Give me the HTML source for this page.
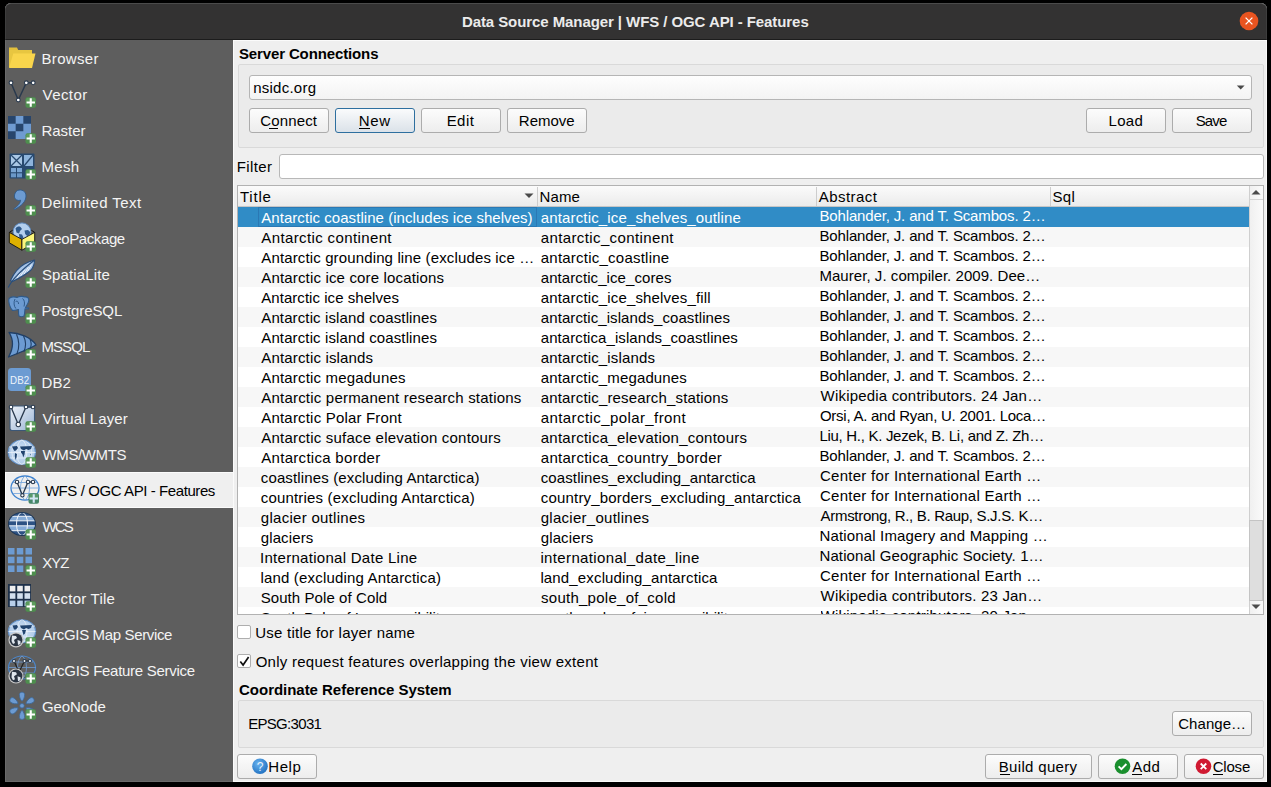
<!DOCTYPE html><html><head><meta charset="utf-8"><style>
*{margin:0;padding:0;box-sizing:border-box}
html,body{width:1271px;height:787px;background:#000;overflow:hidden;font-family:"Liberation Sans",sans-serif;font-size:15px;color:#000}
.a{position:absolute}
.t{position:absolute;white-space:pre;line-height:20px;height:20px}
.btn{position:absolute;border:1px solid #acacac;border-radius:3px;background:linear-gradient(#fcfcfc,#ededed)}
.btn.def{border-color:#2e6f9f;background:linear-gradient(#fafbfc,#dbe2e9)}
.grp{position:absolute;border:1px solid #d9d9d9;background:#ebebeb;border-radius:2px}
.ul{position:absolute;height:1px;background:#000}
</style></head><body>
<div class="a" style="left:5px;top:3px;width:1262px;height:779px;background:#efefef;border-radius:6px 6px 0 0"></div>
<div class="a" style="left:5px;top:3px;width:1262px;height:37px;background:#333333;border-radius:6px 6px 0 0;border-top:1px solid #4b4b4b;border-left:1px solid #3d3d3d;border-right:1px solid #3d3d3d;border-bottom:1px solid #1c1c1c;background:#333232"></div>
<svg class="a" style="left:1239px;top:11px" width="20" height="20" viewBox="0 0 20 20"><circle cx="10" cy="10" r="9.3" fill="#e95420"/><path d="M6.6 6.6L13.4 13.4M13.4 6.6L6.6 13.4" stroke="#fff" stroke-width="1.3"/><circle cx="10" cy="10" r="1" fill="#fff"/></svg>
<div class="a" style="left:5px;top:40px;width:228px;height:742px;background:#5e5e5e"></div>
<svg class="a" style="left:5px;top:40px" width="40" height="36" viewBox="0 0 40 36"><path d="M4 7.5h8l1.2 2.5H27v4H4z" fill="#e2bf3c"/><path d="M4 10h23v17H4z" fill="#e8c640"/><path d="M8.3 13.5H30.5L27 28H4z" fill="#f9d54c"/></svg>
<svg class="a" style="left:5px;top:76px" width="40" height="36" viewBox="0 0 40 36"><path d="M6 6.8L13.3 24L21.3 6.8H28.2" stroke="#2a3a4e" stroke-width="1.5" fill="none"/><circle cx="6" cy="6.8" r="1.9" fill="#fff" stroke="#2a3a4e" stroke-width="1.1"/><circle cx="21.3" cy="6.8" r="1.9" fill="#fff" stroke="#2a3a4e" stroke-width="1.1"/><circle cx="28.2" cy="6.8" r="1.9" fill="#fff" stroke="#2a3a4e" stroke-width="1.1"/><circle cx="13.3" cy="24" r="1.9" fill="#fff" stroke="#2a3a4e" stroke-width="1.1"/><g transform="translate(0 0)"><rect x="20.5" y="21.3" width="10.5" height="10.5" rx="2" fill="#4e8f4e"/><rect x="21.3" y="22.1" width="8.9" height="4.6" rx="1.2" fill="#6aa86a" opacity=".55"/><path d="M25.75 22.35v8.4M21.55 26.55h8.4" stroke="#ffffff" stroke-width="2.1"/></g></svg>
<svg class="a" style="left:5px;top:112px" width="40" height="36" viewBox="0 0 40 36"><rect x="3" y="4" width="23" height="23" fill="#6f9bd1"/><path d="M3 4h7.67v7.67H3zM18.33 4H26v7.67h-7.67zM10.67 11.67h7.67v7.67h-7.67zM3 19.33h7.67V27H3z" fill="#27456c"/><g transform="translate(0 0)"><rect x="20.5" y="21.3" width="10.5" height="10.5" rx="2" fill="#4e8f4e"/><rect x="21.3" y="22.1" width="8.9" height="4.6" rx="1.2" fill="#6aa86a" opacity=".55"/><path d="M25.75 22.35v8.4M21.55 26.55h8.4" stroke="#ffffff" stroke-width="2.1"/></g></svg>
<svg class="a" style="left:5px;top:148px" width="40" height="36" viewBox="0 0 40 36"><rect x="4.5" y="5.5" width="25" height="25" rx="1" fill="#284a70"/><rect x="6" y="7" width="11" height="11" fill="#a9c8e6"/><path d="M6 7L17 18M17 7L6 18" stroke="#284a70" stroke-width="1.3"/><rect x="19" y="7" width="9" height="11" fill="#8db4dc"/><path d="M28 7L19 18" stroke="#284a70" stroke-width="1.3"/><rect x="6" y="20" width="5" height="4.2" fill="#7aa6d4"/><rect x="12" y="20" width="5" height="4.2" fill="#7aa6d4"/><rect x="6" y="25.3" width="5" height="4" fill="#6a98c8"/><rect x="12" y="25.3" width="5" height="4" fill="#6a98c8"/><g transform="translate(0 0)"><rect x="20.5" y="21.3" width="10.5" height="10.5" rx="2" fill="#4e8f4e"/><rect x="21.3" y="22.1" width="8.9" height="4.6" rx="1.2" fill="#6aa86a" opacity=".55"/><path d="M25.75 22.35v8.4M21.55 26.55h8.4" stroke="#ffffff" stroke-width="2.1"/></g></svg>
<svg class="a" style="left:5px;top:184px" width="40" height="36" viewBox="0 0 40 36"><path d="M12.5 6.5c4-1.5 8.5 0.5 8.5 5.5c0 5.5-4.5 10-11.5 13.5l-0.6-0.8c4-2.8 6.5-5.5 6.7-8.5c-2.5 0.8-5.8-0.3-6.2-3.2c-0.3-2.8 1.3-5.6 3.1-6.5z" fill="#6c9bd2" stroke="#2f5a8a" stroke-width="0.9"/><g transform="translate(0 0)"><rect x="20.5" y="21.3" width="10.5" height="10.5" rx="2" fill="#4e8f4e"/><rect x="21.3" y="22.1" width="8.9" height="4.6" rx="1.2" fill="#6aa86a" opacity=".55"/><path d="M25.75 22.35v8.4M21.55 26.55h8.4" stroke="#ffffff" stroke-width="2.1"/></g></svg>
<svg class="a" style="left:5px;top:220px" width="40" height="36" viewBox="0 0 40 36"><circle cx="17" cy="11.7" r="8.8" fill="#b3cfee" stroke="#5e90cc" stroke-width=".9"/><path d="M10.5 8.5c1.5-2 3.5-2.5 5-1.5l1.5 2l-2 2l-1 2.5l-2.5-1zM19.5 10.5l3.5-0.5l2.2 2l-0.5 2.5l-2.5 1.5l-2-2zM14 14l3 0.5l1.5 3l-2 2.5l-2-1.5z" fill="#2f5a8c"/><path d="M4.3 12.4L7.6 10.3M29.7 12.4L26.4 10.3" stroke="#111" stroke-width="1"/><path d="M4.3 12.4L16.9 19.4V30.2L4.3 22.8z" fill="#dfb100" stroke="#111" stroke-width=".9" stroke-linejoin="round"/><path d="M16.9 19.4L29.7 12.4V22.8L16.9 30.2z" fill="#fbf67c" stroke="#111" stroke-width=".9" stroke-linejoin="round"/><g transform="translate(0 0)"><rect x="20.5" y="21.3" width="10.5" height="10.5" rx="2" fill="#4e8f4e"/><rect x="21.3" y="22.1" width="8.9" height="4.6" rx="1.2" fill="#6aa86a" opacity=".55"/><path d="M25.75 22.35v8.4M21.55 26.55h8.4" stroke="#ffffff" stroke-width="2.1"/></g></svg>
<svg class="a" style="left:5px;top:256px" width="40" height="36" viewBox="0 0 40 36"><path d="M5.5 24.5C9 17 14 11 19.5 8C23 6 26.5 4.8 29.5 4C29.5 8 28.5 11 26 14C22 17.5 16 21.5 7.5 25.5z" fill="#a6c3e6" stroke="#2a4f7c" stroke-width="1.1" stroke-linejoin="round"/><path d="M9 23.5L12 19M12 22L16 16.5M15.5 20L20 13.5M19 18L23.5 11M22.5 15.5L26.5 8.5" stroke="#eef4fb" stroke-width="1" fill="none"/><path d="M3.2 31.5C7 24 14 16 29.3 4.3" stroke="#2a4f7c" stroke-width="1.2" fill="none"/><g transform="translate(0 0)"><rect x="20.5" y="21.3" width="10.5" height="10.5" rx="2" fill="#4e8f4e"/><rect x="21.3" y="22.1" width="8.9" height="4.6" rx="1.2" fill="#6aa86a" opacity=".55"/><path d="M25.75 22.35v8.4M21.55 26.55h8.4" stroke="#ffffff" stroke-width="2.1"/></g></svg>
<svg class="a" style="left:5px;top:292px" width="40" height="36" viewBox="0 0 40 36"><path d="M4 6.5C6 4.5 10 4.5 12 5.5C14 4.2 18 4 20 5C22 4.5 24 6 23.8 8.5C23.5 11 22 13 20.5 15.5L23.8 16L23.5 17L20 16.8C19.8 19 19.8 22 19 23.8C18 25 15 25 14 23.8C13.3 22 13.5 19.5 13.5 17.5C11.5 18 9 18.5 7.5 18.5C5 16 3 10 4 6.5Z" fill="#6c9bd2" stroke="#2f5a8a" stroke-width="1.1" stroke-linejoin="round"/><path d="M10 7C8.5 10 8.8 14 10.8 16.5M10.5 10C11.5 8.5 13.5 9 13.5 12M17.5 6.5C19.5 8 20 11 19 14.5" stroke="#2f5a8a" stroke-width="1" fill="none"/><g transform="translate(0 0)"><rect x="20.5" y="21.3" width="10.5" height="10.5" rx="2" fill="#4e8f4e"/><rect x="21.3" y="22.1" width="8.9" height="4.6" rx="1.2" fill="#6aa86a" opacity=".55"/><path d="M25.75 22.35v8.4M21.55 26.55h8.4" stroke="#ffffff" stroke-width="2.1"/></g></svg>
<svg class="a" style="left:5px;top:328px" width="40" height="36" viewBox="0 0 40 36"><path d="M4 4.5C14 5 26 9 31 17C24 21 14 25 3.5 29C8 21 9 12 4 4.5z" fill="#6c9bd2" stroke="#203f66" stroke-width="1.3" stroke-linejoin="round"/><path d="M11.5 6.2C14.5 13 14.5 20 11.8 26.3M18.5 8C21 13 21 19 18.8 23.7M25 11.2C26.5 14 26.5 17 25.3 20.6" stroke="#203f66" stroke-width="1.1" fill="none"/><g transform="translate(0 0)"><rect x="20.5" y="21.3" width="10.5" height="10.5" rx="2" fill="#4e8f4e"/><rect x="21.3" y="22.1" width="8.9" height="4.6" rx="1.2" fill="#6aa86a" opacity=".55"/><path d="M25.75 22.35v8.4M21.55 26.55h8.4" stroke="#ffffff" stroke-width="2.1"/></g></svg>
<svg class="a" style="left:5px;top:364px" width="40" height="36" viewBox="0 0 40 36"><rect x="3" y="4" width="23" height="23" rx="3.5" fill="#6c9bd2"/><text x="14.6" y="20.3" font-size="11.5" font-family="Liberation Sans" fill="#eef4fb" text-anchor="middle" textLength="19" lengthAdjust="spacingAndGlyphs">DB2</text><g transform="translate(0 0)"><rect x="20.5" y="21.3" width="10.5" height="10.5" rx="2" fill="#4e8f4e"/><rect x="21.3" y="22.1" width="8.9" height="4.6" rx="1.2" fill="#6aa86a" opacity=".55"/><path d="M25.75 22.35v8.4M21.55 26.55h8.4" stroke="#ffffff" stroke-width="2.1"/></g></svg>
<svg class="a" style="left:5px;top:400px" width="40" height="36" viewBox="0 0 40 36"><defs><linearGradient id="vlg" x1="0" y1="0" x2="1" y2="1"><stop offset="0" stop-color="#eef2f8"/><stop offset="1" stop-color="#9cb6d6"/></linearGradient></defs><rect x="5" y="6" width="24.5" height="24.5" rx="2" fill="url(#vlg)" stroke="#3b5777" stroke-width="1.1"/><path d="M6 7L13.3 24.5L21 7H28" stroke="#2a3a4e" stroke-width="1.3" fill="none"/><circle cx="6" cy="7" r="1.8" fill="#fff" stroke="#2a3a4e" stroke-width="1.1"/><circle cx="21" cy="7" r="1.8" fill="#fff" stroke="#2a3a4e" stroke-width="1.1"/><circle cx="28" cy="7" r="1.8" fill="#fff" stroke="#2a3a4e" stroke-width="1.1"/><circle cx="13.3" cy="24.5" r="2.2" fill="#fff" stroke="#2a3a4e" stroke-width="1.1"/><g transform="translate(0 0)"><rect x="20.5" y="21.3" width="10.5" height="10.5" rx="2" fill="#4e8f4e"/><rect x="21.3" y="22.1" width="8.9" height="4.6" rx="1.2" fill="#6aa86a" opacity=".55"/><path d="M25.75 22.35v8.4M21.55 26.55h8.4" stroke="#ffffff" stroke-width="2.1"/></g></svg>
<svg class="a" style="left:5px;top:436px" width="40" height="36" viewBox="0 0 40 36"><defs><radialGradient id="wmg" cx=".5" cy=".5" r=".55"><stop offset="0" stop-color="#d6e5f5"/><stop offset=".8" stop-color="#b3cdea"/><stop offset="1" stop-color="#6f9bd0"/></radialGradient></defs><ellipse cx="16.8" cy="16.25" rx="13.8" ry="12.3" fill="url(#wmg)" stroke="#5f8fc8" stroke-width="1"/><path d="M4 11h25.6M3 16.5h27.6M4.5 22h24.6" stroke="#eef4fa" stroke-width=".7" fill="none"/><ellipse cx="16.8" cy="16.25" rx="5" ry="12" fill="none" stroke="#eef4fa" stroke-width=".7"/><ellipse cx="16.8" cy="16.25" rx="10" ry="12" fill="none" stroke="#eef4fa" stroke-width=".6"/><path d="M7 10.5L12 10L13 12L11 14.5L9.5 15L8 12.8zM10 17L12 18L11.5 21.5L10.5 24L9.8 20zM15 10.5L27 10L26 13L23.5 14L21 13L19 14.5L16 13zM16 15L20 15L19.5 18.5L18.2 21.5L17.5 18.5L16 16.5zM25 18l1 .5l-.5 1z" fill="#20436e"/><g transform="translate(0 0)"><rect x="20.5" y="21.3" width="10.5" height="10.5" rx="2" fill="#4e8f4e"/><rect x="21.3" y="22.1" width="8.9" height="4.6" rx="1.2" fill="#6aa86a" opacity=".55"/><path d="M25.75 22.35v8.4M21.55 26.55h8.4" stroke="#ffffff" stroke-width="2.1"/></g></svg>
<div class="a" style="left:5px;top:472px;width:228px;height:36px;background:#efefef"></div>
<svg class="a" style="left:5px;top:472px" width="40" height="36" viewBox="0 0 40 36"><ellipse cx="20" cy="16" rx="14" ry="12" fill="none" stroke="#3f83cf" stroke-width="1.3"/><path d="M6 16h28M8 10.5h24M8 21.5h24M20 4c-6 4-6 20 0 24M20 4c6 4 6 20 0 24" stroke="#7aa8dc" stroke-width=".9" fill="none"/><path d="M12 10L17.4 23.3L23 10H28" stroke="#2a3a4e" stroke-width="1.3" fill="none"/><circle cx="12" cy="10" r="1.7" fill="#fff" stroke="#2a3a4e" stroke-width="1.1"/><circle cx="23" cy="10" r="1.7" fill="#fff" stroke="#2a3a4e" stroke-width="1.1"/><circle cx="28" cy="10" r="1.7" fill="#fff" stroke="#2a3a4e" stroke-width="1.1"/><circle cx="17.4" cy="23.3" r="1.7" fill="#fff" stroke="#2a3a4e" stroke-width="1.1"/><g transform="translate(3 0)"><rect x="20.5" y="21.3" width="10.5" height="10.5" rx="2" fill="#46876a"/><rect x="21.3" y="22.1" width="8.9" height="4.6" rx="1.2" fill="#6aa86a" opacity=".55"/><path d="M25.75 22.35v8.4M21.55 26.55h8.4" stroke="#d3e6f5" stroke-width="2.1"/></g></svg>
<svg class="a" style="left:5px;top:508px" width="40" height="36" viewBox="0 0 40 36"><defs><clipPath id="wcsc"><ellipse cx="17" cy="16" rx="13" ry="11"/></clipPath></defs><ellipse cx="17" cy="16" rx="14" ry="12" fill="#1e3858"/><g clip-path="url(#wcsc)"><rect x="0" y="0" width="34" height="34" fill="#2d5283"/><rect x="0" y="8.5" width="34" height="4" fill="#86acd8"/><rect x="0" y="13" width="34" height="4.5" fill="#2d5283"/><rect x="0" y="18" width="34" height="4.5" fill="#86acd8"/><path d="M0 8.3h34M0 12.8h34M0 17.8h34M0 22.7h34" stroke="#f4f8fc" stroke-width="1"/><ellipse cx="17" cy="16" rx="5.5" ry="11.5" fill="none" stroke="#f4f8fc" stroke-width="1"/></g><g transform="translate(0 0)"><rect x="20.5" y="21.3" width="10.5" height="10.5" rx="2" fill="#4e8f4e"/><rect x="21.3" y="22.1" width="8.9" height="4.6" rx="1.2" fill="#6aa86a" opacity=".55"/><path d="M25.75 22.35v8.4M21.55 26.55h8.4" stroke="#ffffff" stroke-width="2.1"/></g></svg>
<svg class="a" style="left:5px;top:544px" width="40" height="36" viewBox="0 0 40 36"><g fill="#6c9bd2"><rect x="3" y="4" width="6.5" height="6.5"/><rect x="11.8" y="4" width="6.5" height="6.5"/><rect x="20.5" y="4" width="6.5" height="6.5"/><rect x="3" y="12.7" width="6.5" height="6.5"/><rect x="11.8" y="12.7" width="6.5" height="6.5"/><rect x="20.5" y="12.7" width="6.5" height="6.5"/><rect x="3" y="21.5" width="6.5" height="6.5"/><rect x="11.8" y="21.5" width="6.5" height="6.5"/></g><g transform="translate(0 0)"><rect x="20.5" y="21.3" width="10.5" height="10.5" rx="2" fill="#4e8f4e"/><rect x="21.3" y="22.1" width="8.9" height="4.6" rx="1.2" fill="#6aa86a" opacity=".55"/><path d="M25.75 22.35v8.4M21.55 26.55h8.4" stroke="#ffffff" stroke-width="2.1"/></g></svg>
<svg class="a" style="left:5px;top:580px" width="40" height="36" viewBox="0 0 40 36"><rect x="3" y="4" width="23" height="23" fill="#1d3049"/><g fill="#eeeeee"><rect x="4.8" y="5.8" width="5.6" height="5.6"/><rect x="12.2" y="5.8" width="5.6" height="5.6"/><rect x="19.5" y="5.8" width="5.6" height="5.6"/></g><g fill="#d3e0ee"><rect x="4.8" y="13.2" width="5.6" height="5.6"/><rect x="12.2" y="13.2" width="5.6" height="5.6"/><rect x="19.5" y="13.2" width="5.6" height="5.6"/></g><g fill="#b9d0ea"><rect x="4.8" y="20.6" width="5.6" height="5.6"/><rect x="12.2" y="20.6" width="5.6" height="5.6"/><rect x="19.5" y="20.6" width="5.6" height="5.6"/></g><g transform="translate(0 0)"><rect x="20.5" y="21.3" width="10.5" height="10.5" rx="2" fill="#4e8f4e"/><rect x="21.3" y="22.1" width="8.9" height="4.6" rx="1.2" fill="#6aa86a" opacity=".55"/><path d="M25.75 22.35v8.4M21.55 26.55h8.4" stroke="#ffffff" stroke-width="2.1"/></g></svg>
<svg class="a" style="left:5px;top:616px" width="40" height="36" viewBox="0 0 40 36"><defs><radialGradient id="amg" cx=".5" cy=".5" r=".55"><stop offset="0" stop-color="#d6e5f5"/><stop offset=".8" stop-color="#b3cdea"/><stop offset="1" stop-color="#6f9bd0"/></radialGradient></defs><ellipse cx="17" cy="15.3" rx="13.8" ry="11.6" fill="url(#amg)" stroke="#5f8fc8" stroke-width="1"/><path d="M4 10h26M3.5 15.5h27M6 21h22" stroke="#eef4fa" stroke-width=".7" fill="none"/><ellipse cx="17" cy="15.3" rx="5" ry="11.4" fill="none" stroke="#eef4fa" stroke-width=".7"/><path d="M7.5 9.5L12 9L13 11L11 13.5L9 13.5zM15 9.5L27 9L26 12L23.5 13L21 12L19 13.5L16 12zM17 14L21 14L20 17.5L18.5 19z" fill="#20436e"/><circle cx="11" cy="23.8" r="7.6" fill="#c8c8c8"/><circle cx="11" cy="23.8" r="6.4" fill="#2a3442"/><path d="M7 19.5l4 0.5l1 2l-3 2l1 3l-2 1l-1.5-3zM12.5 24l3 1l0 3l-2.5 1z" fill="#dfe6ee"/><g transform="translate(0 0)"><rect x="20.5" y="21.3" width="10.5" height="10.5" rx="2" fill="#4e8f4e"/><rect x="21.3" y="22.1" width="8.9" height="4.6" rx="1.2" fill="#6aa86a" opacity=".55"/><path d="M25.75 22.35v8.4M21.55 26.55h8.4" stroke="#ffffff" stroke-width="2.1"/></g></svg>
<svg class="a" style="left:5px;top:652px" width="40" height="36" viewBox="0 0 40 36"><ellipse cx="17" cy="15.5" rx="13.5" ry="11.5" fill="none" stroke="#4a86cc" stroke-width="1.2"/><path d="M4 15.5h27M6 10h22M6 21h22M17 4c-6 4-6 19 0 23M17 4c6 4 6 19 0 23" stroke="#6f9bd0" stroke-width=".8" fill="none"/><path d="M9 9L14 20L19.5 9H25" stroke="#222" stroke-width="1.2" fill="none"/><circle cx="9" cy="9" r="1.5" fill="#fff" stroke="#2a3a4e" stroke-width="1.1"/><circle cx="19.5" cy="9" r="1.5" fill="#fff" stroke="#2a3a4e" stroke-width="1.1"/><circle cx="25" cy="9" r="1.5" fill="#fff" stroke="#2a3a4e" stroke-width="1.1"/><circle cx="11" cy="24" r="7.6" fill="#c8c8c8"/><circle cx="11" cy="24" r="6.4" fill="#2a3442"/><path d="M7 19.7l4 0.5l1 2l-3 2l1 3l-2 1l-1.5-3zM12.5 24.2l3 1l0 3l-2.5 1z" fill="#dfe6ee"/><g transform="translate(0 0)"><rect x="20.5" y="21.3" width="10.5" height="10.5" rx="2" fill="#4e8f4e"/><rect x="21.3" y="22.1" width="8.9" height="4.6" rx="1.2" fill="#6aa86a" opacity=".55"/><path d="M25.75 22.35v8.4M21.55 26.55h8.4" stroke="#ffffff" stroke-width="2.1"/></g></svg>
<svg class="a" style="left:5px;top:688px" width="40" height="36" viewBox="0 0 40 36"><g fill="#6c9bd2" stroke="#3d6898" stroke-width=".8"><circle cx="17" cy="17.8" r="2.3"/><path d="M17 13.3C15.4 12 14.1 8.5 14.4 6.2C14.7 4.7 15.9 4.2 17 4.2C18.1 4.2 19.3 4.7 19.6 6.2C19.9 8.5 18.6 12 17 13.3Z" transform="rotate(0 17 17.8)"/><path d="M17 13.3C15.4 12 14.1 8.5 14.4 6.2C14.7 4.7 15.9 4.2 17 4.2C18.1 4.2 19.3 4.7 19.6 6.2C19.9 8.5 18.6 12 17 13.3Z" transform="rotate(60 17 17.8)"/><path d="M17 13.3C15.4 12 14.1 8.5 14.4 6.2C14.7 4.7 15.9 4.2 17 4.2C18.1 4.2 19.3 4.7 19.6 6.2C19.9 8.5 18.6 12 17 13.3Z" transform="rotate(120 17 17.8)"/><path d="M17 13.3C15.4 12 14.1 8.5 14.4 6.2C14.7 4.7 15.9 4.2 17 4.2C18.1 4.2 19.3 4.7 19.6 6.2C19.9 8.5 18.6 12 17 13.3Z" transform="rotate(180 17 17.8)"/><path d="M17 13.3C15.4 12 14.1 8.5 14.4 6.2C14.7 4.7 15.9 4.2 17 4.2C18.1 4.2 19.3 4.7 19.6 6.2C19.9 8.5 18.6 12 17 13.3Z" transform="rotate(240 17 17.8)"/><path d="M17 13.3C15.4 12 14.1 8.5 14.4 6.2C14.7 4.7 15.9 4.2 17 4.2C18.1 4.2 19.3 4.7 19.6 6.2C19.9 8.5 18.6 12 17 13.3Z" transform="rotate(300 17 17.8)"/></g><g transform="translate(0 0)"><rect x="20.5" y="21.3" width="10.5" height="10.5" rx="2" fill="#4e8f4e"/><rect x="21.3" y="22.1" width="8.9" height="4.6" rx="1.2" fill="#6aa86a" opacity=".55"/><path d="M25.75 22.35v8.4M21.55 26.55h8.4" stroke="#ffffff" stroke-width="2.1"/></g></svg>
<div class="a" style="left:233px;top:40px;width:1px;height:742px;background:#fbfbfb"></div>
<div class="a" style="left:233px;top:40px;width:1034px;height:1px;background:#fbfbfb"></div>
<div class="a" style="left:5px;top:40px;width:1px;height:742px;background:#6a6a6a"></div>
<div class="a" style="left:5px;top:781px;width:228px;height:1px;background:#6a6a6a"></div>
<div class="a" style="left:233px;top:781px;width:1034px;height:1px;background:#fafafa"></div>
<div class="a" style="left:1266px;top:40px;width:1px;height:742px;background:#fafafa"></div>
<div class="a" style="left:5px;top:472px;width:228px;height:36px;border:1px solid #fbfbfb;border-right:none"></div>
<div class="grp" style="left:238px;top:64px;width:1026px;height:84px"></div>
<div class="btn" style="left:249px;top:75px;width:1003px;height:25px;border-color:#b5b5b5;background:linear-gradient(#fefefe,#f3f3f3)"></div>
<svg class="a" style="left:1236px;top:85px" width="10" height="6"><path d="M0.8 0.5h7.8L4.7 4.6z" fill="#4a4a4a"/></svg>
<div class="btn" style="left:249px;top:108px;width:80px;height:25px"></div>
<div class="ul" style="left:269px;top:128px;width:9px"></div>
<div class="btn def" style="left:335px;top:108px;width:80px;height:25px"></div>
<div class="ul" style="left:359px;top:128px;width:11px"></div>
<div class="btn" style="left:421px;top:108px;width:80px;height:25px"></div>
<div class="btn" style="left:507px;top:108px;width:80px;height:25px"></div>
<div class="btn" style="left:1086px;top:108px;width:80px;height:25px"></div>
<div class="btn" style="left:1172px;top:108px;width:80px;height:25px"></div>
<div class="a" style="left:279px;top:154px;width:985px;height:25px;background:#fff;border:1px solid #b8b8b8;border-radius:3px"></div>
<div class="a" style="left:237px;top:185px;width:1027px;height:430px;background:#fff;border:1px solid #b2b2b2"></div>
<div class="a" style="left:238px;top:186px;width:1011px;height:21px;background:linear-gradient(#fbfbfb,#ebebeb);border-bottom:1px solid #c6c6c6"></div>
<div class="a" style="left:537px;top:187px;width:1px;height:19px;background:#cdcdcd"></div>
<div class="a" style="left:816px;top:187px;width:1px;height:19px;background:#cdcdcd"></div>
<div class="a" style="left:1050px;top:187px;width:1px;height:19px;background:#cdcdcd"></div>
<svg class="a" style="left:524px;top:193px" width="10" height="6"><path d="M0.5 0.5h9L5 5z" fill="#4a4a4a"/></svg>
<div class="a" style="left:238px;top:207px;width:1011px;height:407px;overflow:hidden">
<div class="a" style="left:0;top:0px;width:1011px;height:20px;background:#308cc6"></div>
<div class="a" style="left:0;top:20px;width:1011px;height:20px;background:#f7f7f7"></div>
<div class="a" style="left:0;top:40px;width:1011px;height:20px;background:#ffffff"></div>
<div class="a" style="left:0;top:60px;width:1011px;height:20px;background:#f7f7f7"></div>
<div class="a" style="left:0;top:80px;width:1011px;height:20px;background:#ffffff"></div>
<div class="a" style="left:0;top:100px;width:1011px;height:20px;background:#f7f7f7"></div>
<div class="a" style="left:0;top:120px;width:1011px;height:20px;background:#ffffff"></div>
<div class="a" style="left:0;top:140px;width:1011px;height:20px;background:#f7f7f7"></div>
<div class="a" style="left:0;top:160px;width:1011px;height:20px;background:#ffffff"></div>
<div class="a" style="left:0;top:180px;width:1011px;height:20px;background:#f7f7f7"></div>
<div class="a" style="left:0;top:200px;width:1011px;height:20px;background:#ffffff"></div>
<div class="a" style="left:0;top:220px;width:1011px;height:20px;background:#f7f7f7"></div>
<div class="a" style="left:0;top:240px;width:1011px;height:20px;background:#ffffff"></div>
<div class="a" style="left:0;top:260px;width:1011px;height:20px;background:#f7f7f7"></div>
<div class="a" style="left:0;top:280px;width:1011px;height:20px;background:#ffffff"></div>
<div class="a" style="left:0;top:300px;width:1011px;height:20px;background:#f7f7f7"></div>
<div class="a" style="left:0;top:320px;width:1011px;height:20px;background:#ffffff"></div>
<div class="a" style="left:0;top:340px;width:1011px;height:20px;background:#f7f7f7"></div>
<div class="a" style="left:0;top:360px;width:1011px;height:20px;background:#ffffff"></div>
<div class="a" style="left:0;top:380px;width:1011px;height:20px;background:#f7f7f7"></div>
<div class="a" style="left:0;top:400px;width:1011px;height:20px;background:#ffffff"></div>
<div class="a" style="left:20px;top:0;width:279px;height:20px;border:1px solid #2a78b4"></div>
</div>
<div class="a" style="left:1249px;top:186px;width:14px;height:428px;background:linear-gradient(90deg,#f0f0f0,#fafafa);border-left:1px solid #cfcfcf"></div>
<div class="a" style="left:1250px;top:199px;width:13px;height:1px;background:#d4d4d4"></div>
<svg class="a" style="left:1251px;top:189px" width="10" height="6"><path d="M0.5 5.5h9L5 1z" fill="#4a4a4a"/></svg>
<div class="a" style="left:1250px;top:600px;width:13px;height:1px;background:#d4d4d4"></div>
<svg class="a" style="left:1251px;top:604px" width="10" height="6"><path d="M0.5 0.5h9L5 5z" fill="#4a4a4a"/></svg>
<div class="a" style="left:1249px;top:520px;width:14px;height:81px;background:#dedede;border:1px solid #c4c4c4"></div>
<div class="a" style="left:237px;top:625px;width:14px;height:14px;background:#fff;border:1px solid #aeaeae;border-radius:2px"></div>
<div class="a" style="left:237px;top:654px;width:14px;height:14px;background:#fff;border:1px solid #aeaeae;border-radius:2px"></div>
<svg class="a" style="left:239px;top:656px" width="11" height="11"><path d="M1.3 5.5l2.8 3.6L9.6 1" stroke="#111" stroke-width="1.7" fill="none"/></svg>
<div class="grp" style="left:238px;top:700px;width:1026px;height:48px"></div>
<div class="btn" style="left:1172px;top:711px;width:80px;height:25px"></div>
<div class="btn" style="left:237px;top:754px;width:80px;height:25px"></div>
<div class="btn" style="left:985px;top:754px;width:107px;height:25px"></div>
<div class="btn" style="left:1098px;top:754px;width:80px;height:25px"></div>
<div class="btn" style="left:1184px;top:754px;width:80px;height:25px"></div>
<svg class="a" style="left:252px;top:758px" width="17" height="17" viewBox="0 0 17 17"><defs><radialGradient id="hg" cx=".4" cy=".35" r=".7"><stop offset="0" stop-color="#6ab4f0"/><stop offset="1" stop-color="#1f6fc0"/></radialGradient></defs><circle cx="8" cy="8.2" r="7.8" fill="url(#hg)"/><text x="8" y="12.6" font-size="12" text-anchor="middle" fill="#e8f2fc" font-family="Liberation Sans">?</text></svg>
<div class="ul" style="left:1000px;top:774px;width:10px"></div>
<svg class="a" style="left:1114px;top:758px" width="17" height="17" viewBox="0 0 17 17"><circle cx="8.5" cy="8.3" r="7.8" fill="#1a8f2e"/><path d="M4.6 8.4l2.8 2.8l5-5.2" stroke="#fff" stroke-width="1.9" fill="none"/></svg>
<div class="ul" style="left:1132px;top:774px;width:10px"></div>
<svg class="a" style="left:1195px;top:758px" width="17" height="17" viewBox="0 0 17 17"><circle cx="8.5" cy="8.3" r="7.8" fill="#d01a32"/><path d="M5.7 5.5l5.6 5.6M11.3 5.5l-5.6 5.6" stroke="#fff" stroke-width="1.8"/></svg>
<div class="ul" style="left:1213px;top:774px;width:10px"></div>
<div class="t" style="left:461.90px;top:11.50px;color:#ebebeb;font-weight:bold;letter-spacing:-0.079px;">Data Source Manager | WFS / OGC API - Features</div>
<div class="t" style="left:41.45px;top:48.80px;color:#f4f4f4;letter-spacing:0.350px;">Browser</div>
<div class="t" style="left:42.58px;top:84.80px;color:#f4f4f4;letter-spacing:0.415px;">Vector</div>
<div class="t" style="left:41.45px;top:120.80px;color:#f4f4f4;letter-spacing:-0.030px;">Raster</div>
<div class="t" style="left:41.45px;top:156.80px;color:#f4f4f4;letter-spacing:0.333px;">Mesh</div>
<div class="t" style="left:41.45px;top:192.80px;color:#f4f4f4;letter-spacing:0.440px;">Delimited Text</div>
<div class="t" style="left:41.95px;top:228.80px;color:#f4f4f4;letter-spacing:-0.386px;">GeoPackage</div>
<div class="t" style="left:41.95px;top:264.80px;color:#f4f4f4;letter-spacing:0.136px;">SpatiaLite</div>
<div class="t" style="left:41.45px;top:300.80px;color:#f4f4f4;letter-spacing:-0.100px;">PostgreSQL</div>
<div class="t" style="left:41.45px;top:336.80px;color:#f4f4f4;letter-spacing:-0.913px;">MSSQL</div>
<div class="t" style="left:41.45px;top:372.80px;color:#f4f4f4;letter-spacing:0.125px;">DB2</div>
<div class="t" style="left:42.58px;top:408.80px;color:#f4f4f4;letter-spacing:0.106px;">Virtual Layer</div>
<div class="t" style="left:42.58px;top:444.80px;color:#f4f4f4;letter-spacing:-0.396px;">WMS/WMTS</div>
<div class="t" style="left:44.88px;top:480.80px;color:#000;letter-spacing:-0.415px;">WFS / OGC API - Features</div>
<div class="t" style="left:42.58px;top:516.80px;color:#f4f4f4;letter-spacing:-1.875px;">WCS</div>
<div class="t" style="left:42.33px;top:552.80px;color:#f4f4f4;letter-spacing:-1.038px;">XYZ</div>
<div class="t" style="left:42.58px;top:588.80px;color:#f4f4f4;letter-spacing:0.230px;">Vector Tile</div>
<div class="t" style="left:42.58px;top:624.80px;color:#f4f4f4;letter-spacing:-0.354px;">ArcGIS Map Service</div>
<div class="t" style="left:42.58px;top:660.80px;color:#f4f4f4;letter-spacing:-0.277px;">ArcGIS Feature Service</div>
<div class="t" style="left:41.95px;top:696.80px;color:#f4f4f4;letter-spacing:-0.062px;">GeoNode</div>
<div class="t" style="left:238.90px;top:43.50px;color:#000;font-weight:bold;letter-spacing:-0.125px;">Server Connections</div>
<div class="t" style="left:253.20px;top:77.60px;color:#000;letter-spacing:0.241px;">nsidc.org</div>
<div class="t" style="left:260.15px;top:110.80px;color:#000;letter-spacing:0.167px;">Connect</div>
<div class="t" style="left:358.75px;top:110.80px;color:#000;letter-spacing:0.725px;">New</div>
<div class="t" style="left:446.65px;top:110.80px;color:#000;letter-spacing:0.467px;">Edit</div>
<div class="t" style="left:518.85px;top:110.80px;color:#000;letter-spacing:-0.040px;">Remove</div>
<div class="t" style="left:1108.45px;top:110.80px;color:#000;letter-spacing:0.358px;">Load</div>
<div class="t" style="left:1195.65px;top:110.80px;color:#000;letter-spacing:-0.850px;">Save</div>
<div class="t" style="left:236.65px;top:156.80px;color:#000;letter-spacing:0.425px;">Filter</div>
<div class="t" style="left:239.93px;top:186.70px;color:#000;letter-spacing:0.787px;">Title</div>
<div class="t" style="left:539.45px;top:186.70px;color:#000;letter-spacing:0.158px;">Name</div>
<div class="t" style="left:818.77px;top:186.70px;color:#000;letter-spacing:0.450px;">Abstract</div>
<div class="t" style="left:1052.45px;top:186.70px;color:#000;letter-spacing:0.413px;">Sql</div>
<div class="t" style="left:261.27px;top:207.70px;color:#fff;letter-spacing:0.050px;">Antarctic coastline (includes ice shelves)</div>
<div class="t" style="left:540.77px;top:207.70px;color:#fff;letter-spacing:0.148px;">antarctic_ice_shelves_outline</div>
<div class="t" style="left:819.45px;top:205.80px;color:#fff;letter-spacing:-0.144px;">Bohlander, J. and T. Scambos. 2…</div>
<div class="t" style="left:261.27px;top:227.70px;color:#000;letter-spacing:0.382px;">Antarctic continent</div>
<div class="t" style="left:540.77px;top:227.70px;color:#000;letter-spacing:0.381px;">antarctic_continent</div>
<div class="t" style="left:819.45px;top:225.80px;color:#000;letter-spacing:-0.144px;">Bohlander, J. and T. Scambos. 2…</div>
<div class="t" style="left:261.27px;top:247.70px;color:#000;letter-spacing:0.136px;">Antarctic grounding line (excludes ice …</div>
<div class="t" style="left:540.77px;top:247.70px;color:#000;letter-spacing:0.228px;">antarctic_coastline</div>
<div class="t" style="left:819.45px;top:245.80px;color:#000;letter-spacing:-0.144px;">Bohlander, J. and T. Scambos. 2…</div>
<div class="t" style="left:261.27px;top:267.70px;color:#000;letter-spacing:0.161px;">Antarctic ice core locations</div>
<div class="t" style="left:540.77px;top:267.70px;color:#000;letter-spacing:0.078px;">antarctic_ice_cores</div>
<div class="t" style="left:819.45px;top:265.80px;color:#000;letter-spacing:0.050px;">Maurer, J. compiler. 2009. Dee…</div>
<div class="t" style="left:261.27px;top:287.70px;color:#000;letter-spacing:0.045px;">Antarctic ice shelves</div>
<div class="t" style="left:540.77px;top:287.70px;color:#000;letter-spacing:0.154px;">antarctic_ice_shelves_fill</div>
<div class="t" style="left:819.45px;top:285.80px;color:#000;letter-spacing:-0.144px;">Bohlander, J. and T. Scambos. 2…</div>
<div class="t" style="left:261.27px;top:307.70px;color:#000;letter-spacing:0.120px;">Antarctic island coastlines</div>
<div class="t" style="left:540.77px;top:307.70px;color:#000;letter-spacing:0.088px;">antarctic_islands_coastlines</div>
<div class="t" style="left:819.45px;top:305.80px;color:#000;letter-spacing:-0.144px;">Bohlander, J. and T. Scambos. 2…</div>
<div class="t" style="left:261.27px;top:327.70px;color:#000;letter-spacing:0.120px;">Antarctic island coastlines</div>
<div class="t" style="left:540.77px;top:327.70px;color:#000;letter-spacing:0.071px;">antarctica_islands_coastlines</div>
<div class="t" style="left:819.45px;top:325.80px;color:#000;letter-spacing:-0.144px;">Bohlander, J. and T. Scambos. 2…</div>
<div class="t" style="left:261.27px;top:347.70px;color:#000;letter-spacing:0.163px;">Antarctic islands</div>
<div class="t" style="left:540.77px;top:347.70px;color:#000;letter-spacing:0.150px;">antarctic_islands</div>
<div class="t" style="left:819.45px;top:345.80px;color:#000;letter-spacing:-0.144px;">Bohlander, J. and T. Scambos. 2…</div>
<div class="t" style="left:261.27px;top:367.70px;color:#000;letter-spacing:0.181px;">Antarctic megadunes</div>
<div class="t" style="left:540.77px;top:367.70px;color:#000;letter-spacing:0.147px;">antarctic_megadunes</div>
<div class="t" style="left:819.45px;top:365.80px;color:#000;letter-spacing:-0.144px;">Bohlander, J. and T. Scambos. 2…</div>
<div class="t" style="left:261.27px;top:387.70px;color:#000;letter-spacing:0.206px;">Antarctic permanent research stations</div>
<div class="t" style="left:540.77px;top:387.70px;color:#000;letter-spacing:0.160px;">antarctic_research_stations</div>
<div class="t" style="left:820.58px;top:385.80px;color:#000;letter-spacing:0.188px;">Wikipedia contributors. 24 Jan…</div>
<div class="t" style="left:261.27px;top:407.70px;color:#000;letter-spacing:0.190px;">Antarctic Polar Front</div>
<div class="t" style="left:540.77px;top:407.70px;color:#000;letter-spacing:0.410px;">antarctic_polar_front</div>
<div class="t" style="left:819.95px;top:405.80px;color:#000;letter-spacing:-0.252px;">Orsi, A. and Ryan, U. 2001. Loca…</div>
<div class="t" style="left:261.27px;top:427.70px;color:#000;letter-spacing:0.203px;">Antarctic suface elevation contours</div>
<div class="t" style="left:540.77px;top:427.70px;color:#000;letter-spacing:0.249px;">antarctica_elevation_contours</div>
<div class="t" style="left:819.45px;top:425.80px;color:#000;letter-spacing:-0.296px;">Liu, H., K. Jezek, B. Li, and Z. Zh…</div>
<div class="t" style="left:261.27px;top:447.70px;color:#000;letter-spacing:0.295px;">Antarctica border</div>
<div class="t" style="left:540.77px;top:447.70px;color:#000;letter-spacing:0.284px;">antarctica_country_border</div>
<div class="t" style="left:819.45px;top:445.80px;color:#000;letter-spacing:-0.144px;">Bohlander, J. and T. Scambos. 2…</div>
<div class="t" style="left:260.77px;top:467.70px;color:#000;letter-spacing:0.138px;">coastlines (excluding Antarctica)</div>
<div class="t" style="left:540.77px;top:467.70px;color:#000;letter-spacing:0.103px;">coastlines_excluding_antarctica</div>
<div class="t" style="left:819.95px;top:465.80px;color:#000;letter-spacing:0.281px;">Center for International Earth …</div>
<div class="t" style="left:260.77px;top:487.70px;color:#000;letter-spacing:0.179px;">countries (excluding Antarctica)</div>
<div class="t" style="left:540.77px;top:487.70px;color:#000;letter-spacing:0.186px;">country_borders_excluding_antarctica</div>
<div class="t" style="left:819.95px;top:485.80px;color:#000;letter-spacing:0.281px;">Center for International Earth …</div>
<div class="t" style="left:260.77px;top:507.70px;color:#000;letter-spacing:0.282px;">glacier outlines</div>
<div class="t" style="left:540.77px;top:507.70px;color:#000;letter-spacing:0.267px;">glacier_outlines</div>
<div class="t" style="left:820.58px;top:505.80px;color:#000;letter-spacing:-0.309px;">Armstrong, R., B. Raup, S.J.S. K…</div>
<div class="t" style="left:260.77px;top:527.70px;color:#000;letter-spacing:0.114px;">glaciers</div>
<div class="t" style="left:540.77px;top:527.70px;color:#000;letter-spacing:0.114px;">glaciers</div>
<div class="t" style="left:819.45px;top:525.80px;color:#000;letter-spacing:0.164px;">National Imagery and Mapping …</div>
<div class="t" style="left:260.02px;top:547.70px;color:#000;letter-spacing:0.283px;">International Date Line</div>
<div class="t" style="left:540.40px;top:547.70px;color:#000;letter-spacing:0.365px;">international_date_line</div>
<div class="t" style="left:819.45px;top:545.80px;color:#000;letter-spacing:0.117px;">National Geographic Society. 1…</div>
<div class="t" style="left:260.40px;top:567.70px;color:#000;letter-spacing:0.182px;">land (excluding Antarctica)</div>
<div class="t" style="left:540.40px;top:567.70px;color:#000;letter-spacing:0.150px;">land_excluding_antarctica</div>
<div class="t" style="left:819.95px;top:565.80px;color:#000;letter-spacing:0.281px;">Center for International Earth …</div>
<div class="t" style="left:260.65px;top:587.70px;color:#000;letter-spacing:0.084px;">South Pole of Cold</div>
<div class="t" style="left:541.02px;top:587.70px;color:#000;letter-spacing:0.262px;">south_pole_of_cold</div>
<div class="t" style="left:820.58px;top:585.80px;color:#000;letter-spacing:0.188px;">Wikipedia contributors. 23 Jan…</div>
<div class="t" style="left:260.65px;top:607.70px;color:#000;height:6.30px;overflow:hidden;">South Pole of Inaccessibility</div>
<div class="t" style="left:541.02px;top:607.70px;color:#000;height:6.30px;overflow:hidden;">south_pole_of_inaccessibility</div>
<div class="t" style="left:820.58px;top:605.80px;color:#000;letter-spacing:0.188px;height:8.20px;overflow:hidden;">Wikipedia contributors. 20 Jan…</div>
<div class="t" style="left:255.27px;top:622.90px;color:#000;letter-spacing:0.235px;">Use title for layer name</div>
<div class="t" style="left:255.65px;top:651.80px;color:#000;letter-spacing:0.269px;">Only request features overlapping the view extent</div>
<div class="t" style="left:239.07px;top:679.80px;color:#000;font-weight:bold;letter-spacing:-0.030px;">Coordinate Reference System</div>
<div class="t" style="left:248.15px;top:713.60px;color:#000;letter-spacing:-0.681px;">EPSG:3031</div>
<div class="t" style="left:1178.25px;top:714.30px;color:#000;letter-spacing:0.042px;">Change…</div>
<div class="t" style="left:268.25px;top:757.30px;color:#000;letter-spacing:0.567px;">Help</div>
<div class="t" style="left:998.75px;top:757.30px;color:#000;letter-spacing:0.325px;">Build query</div>
<div class="t" style="left:1132.17px;top:757.30px;color:#000;letter-spacing:0.538px;">Add</div>
<div class="t" style="left:1212.65px;top:757.30px;color:#000;letter-spacing:-0.175px;">Close</div>
</body></html>
